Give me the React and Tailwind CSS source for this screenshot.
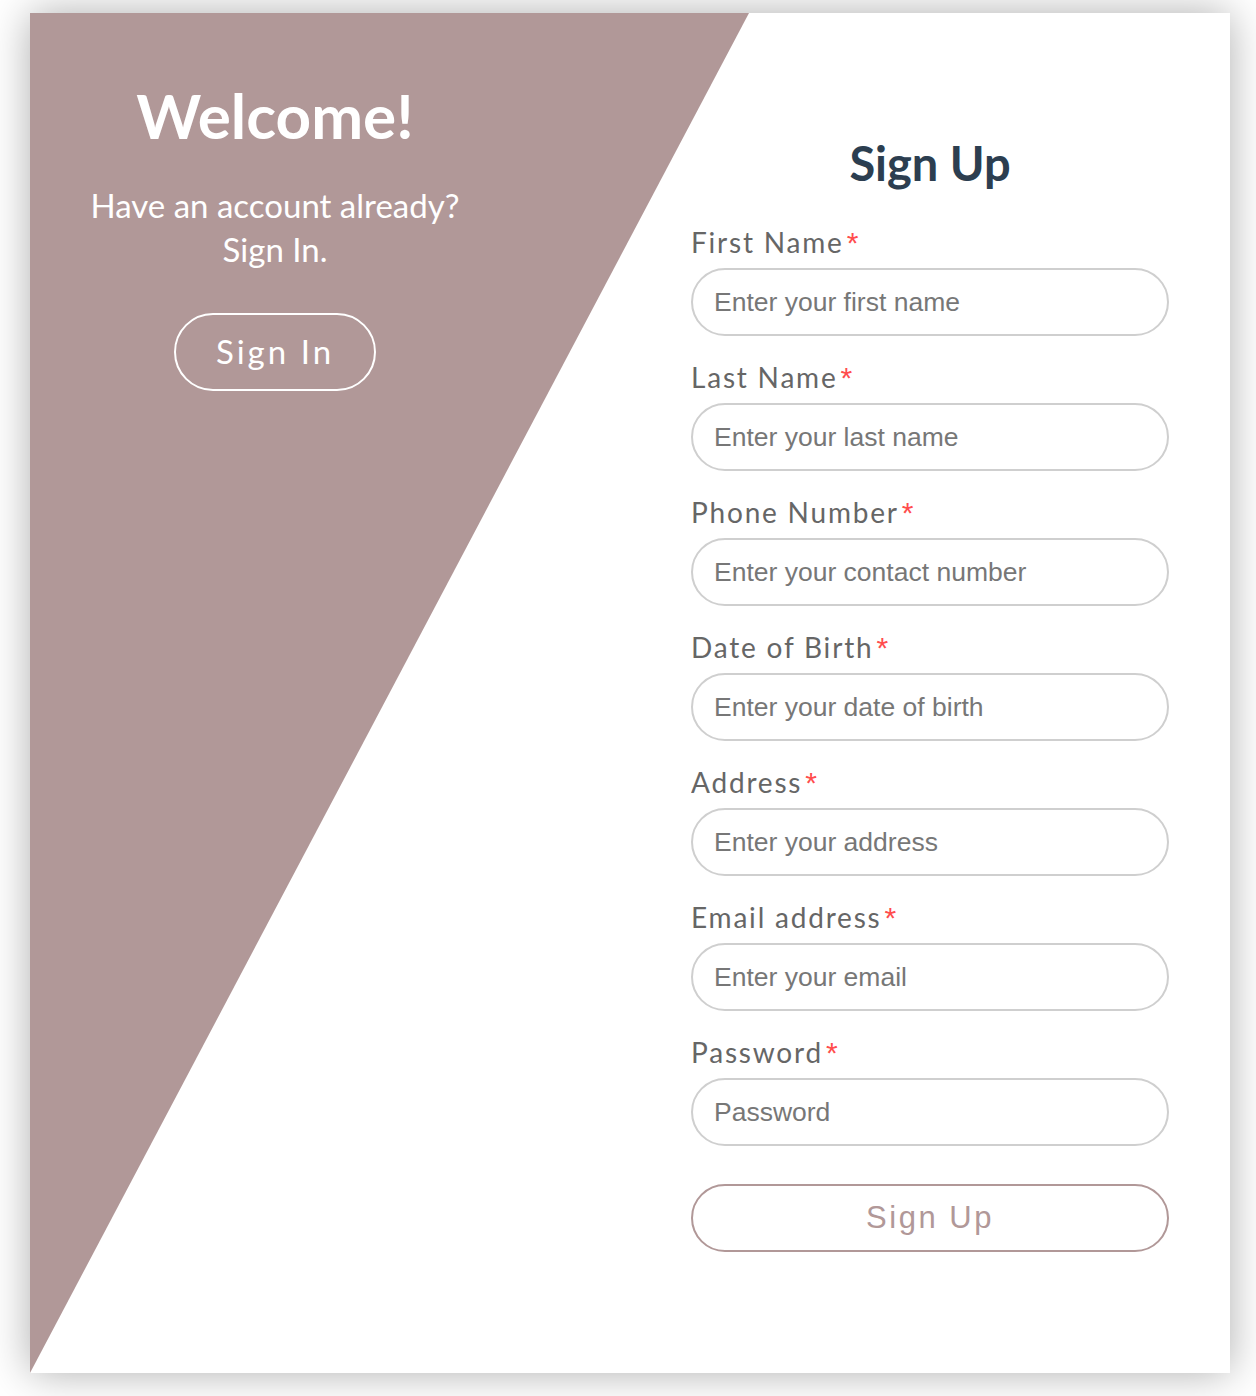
import React from "react";

const fields = [
  { label: "First Name", placeholder: "Enter your first name", type: "text" },
  { label: "Last Name", placeholder: "Enter your last name", type: "text" },
  { label: "Phone Number", placeholder: "Enter your contact number", type: "tel" },
  { label: "Date of Birth", placeholder: "Enter your date of birth", type: "text" },
  { label: "Address", placeholder: "Enter your address", type: "text" },
  { label: "Email address", placeholder: "Enter your email", type: "email" },
  { label: "Password", placeholder: "Password", type: "text" },
];

const sans = "font-['Lato',_'Noto_Sans',_sans-serif]";
const arial = "font-['Liberation_Sans',_Arial,_sans-serif]";

export default function App() {
  return (
    <div className="min-h-[1396px] bg-white pt-[13px] pl-[30px]">
      <div className="relative h-[1360px] w-[1200px] bg-white shadow-[0_0_40px_rgba(0,0,0,0.32)]">
        {/* diagonal colour block */}
        <div className="absolute inset-0 bg-[#b19898] [clip-path:polygon(0_0,719px_0,0_100%)]" />

        <div className="relative flex">
          {/* ---- Left: welcome ---- */}
          <div className={`flex w-[490px] flex-col items-center pt-[64px] text-white ${sans}`}>
            <h1 className="text-[62px] font-bold leading-[76px]">Welcome!</h1>
            <p className="mt-[30px] text-center text-[33px] leading-[44px]">
              Have an account already?
              <br />
              Sign In.
            </p>
            <button className="mt-[42px] h-[78px] w-[202px] rounded-full border-2 border-white text-[33px] tracking-[3px] text-white">
              Sign In
            </button>
          </div>

          {/* ---- Right: form ---- */}
          <div className={`ml-[171px] w-[478px] pt-[122px] ${sans}`}>
            <h2 className="text-center text-[47px] font-bold leading-[56px] text-[#2c3e50]">
              Sign Up
            </h2>
            <form className="mt-[31px] flex flex-col gap-[21px]">
              {fields.map((f) => (
                <div key={f.label} className="flex flex-col gap-[6px]">
                  <label className="flex h-[40px] items-baseline overflow-hidden text-[28px] leading-[40px] tracking-[1.8px] text-[#666]">
                    {f.label}
                    <span className={`ml-[3px] text-[30px] leading-[40px] text-[#ff4d4d] ${arial}`}>*</span>
                  </label>
                  <input
                    type={f.type}
                    placeholder={f.placeholder}
                    className={`h-[68px] w-full rounded-full border-2 border-[#cfcfcf] px-[21px] text-[26.5px] text-[#555] outline-none placeholder:text-[#777] ${arial}`}
                  />
                </div>
              ))}
              <button
                type="button"
                className={`mt-[17px] h-[68px] w-full rounded-full border-2 border-[#b19898] text-[31px] tracking-[2.5px] text-[#b19898] ${arial}`}
              >
                Sign Up
              </button>
            </form>
          </div>
        </div>
      </div>
    </div>
  );
}
